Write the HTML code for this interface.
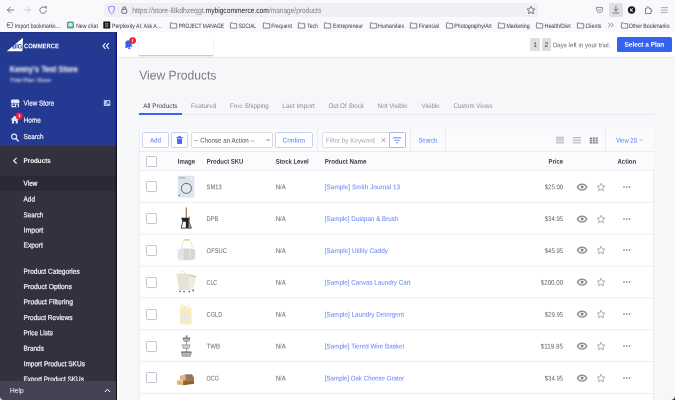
<!DOCTYPE html>
<html lang="en">
<head>
<meta charset="utf-8">
<title>View Products</title>
<style>
html,body{margin:0;padding:0;}
body{width:675px;height:400px;overflow:hidden;background:#f6f7f9;font-family:"Liberation Sans",sans-serif;}
#root{position:relative;width:675px;height:400px;overflow:hidden;background:#f6f7f9;will-change:transform;}
.a{position:absolute;box-sizing:border-box;}
.t{position:absolute;left:0;top:0;white-space:nowrap;display:block;transform-origin:0 0;}
svg{position:absolute;overflow:visible;}
.z6{z-index:6;}
.sb{-webkit-text-stroke:0.2px currentColor;}
.blur1{filter:blur(1.1px);}
.blur2{filter:blur(0.9px);}
</style>
</head>
<body>
<div id="root">
<div class="a" style="left:0px;top:0px;width:675.00px;height:32.00px;background:#f9f9fb;"></div>
<div class="a" style="left:0px;top:31.5px;width:675.00px;height:0.50px;background:#e4e4e8;"></div>
<div class="a" style="left:104.4px;top:2.6px;width:433.60px;height:14.80px;background:#f0f0f4;border-radius:2px;"></div>
<svg style="left:0px;top:0.4px" width="60" height="20" viewBox="0 0 60 20">
<g fill="none" stroke="#5b5b66" stroke-width="0.8" stroke-linecap="round" stroke-linejoin="round">
<path d="M13.800 10H7.500M10.300 7.200L7.500 10l2.800 2.800"/>
<path d="M24.200 10h6.200M27.600 7.200l2.800 2.800-2.800 2.800" stroke="#c3c3ca"/>
<path d="M46.000 8.500A3.300 3.300 0 1 0 46.400 10.800"/>
</g>
<path d="M44.400 6.300h2.300v2.300z" fill="#5b5b66"/>
</svg>
<svg style="left:100px;top:0px" width="40" height="20" viewBox="0 0 40 20">
<path transform="translate(-3.2 0.4)" d="M11.7 6.6c1.3-.2 2.3-.7 3.0-.7.7 0 1.700.5 3.000.7 0 3.300-1.200 5.700-3.000 6.900-1.800-1.200-3.000-3.600-3.000-6.900z" fill="none" stroke="#6f7bf7" stroke-width="0.9" stroke-linejoin="round"/>
<rect x="21.900" y="9.3" width="4.8" height="4.0" rx="0.8" fill="none" stroke="#5b5b66" stroke-width="0.9"/>
<path d="M22.900 9.3V8.2a1.400 1.400 0 0 1 2.800 0v1.100" fill="none" stroke="#5b5b66" stroke-width="0.9"/>
</svg>
<svg style="left:520px;top:0px" width="30" height="20" viewBox="0 0 30 20"><path d="M11 6.200l1.200 2.500 2.700.35-2 1.900.5 2.700-2.400-1.300-2.400 1.300.5-2.700-2-1.900 2.700-.35z" fill="none" stroke="#5b5b66" stroke-width="0.8" stroke-linejoin="round"/></svg>
<div class="a" style="left:609px;top:2.8px;width:13.80px;height:13.80px;background:#dfdfe5;border-radius:2px;"></div>
<svg style="left:590px;top:0.3px" width="85" height="20" viewBox="0 0 85 20">
<g fill="none" stroke="#60606b" stroke-width="0.800" stroke-linecap="round" stroke-linejoin="round">
<path d="M6.600 7.400h6v2.200a3 3 0 0 1-6 0z" stroke="#74747f"/><path d="M8.200 9.200l1.400 1.300 1.400-1.300" stroke="#74747f"/>
<path d="M25.900 6.300v4.600M23.900 9l2 2 2-2M22.900 13h6"/>
<path d="M55.500 13.200V8.400h1.300c0-1.100.3-1.700 1.100-1.700.8 0 1.100.6 1.100 1.700h1.800v1.500c.9 0 1.400.3 1.400.9s-.5.900-1.400.9v1.500z"/>
<path d="M71.200 7.600h6.200M71.200 10h6.200M71.200 12.400h6.200" stroke-width="0.700" stroke="#8b8b96"/>
</g>
<circle cx="41.600" cy="10" r="3.700" fill="#1a1a1f"/>
<path d="M40.300 8.200v3.600h.8V10.400l1.300 1.400h1l-1.600-1.800 1.500-1.800h-1l-1.200 1.500V8.200z" fill="#fff"/>
</svg>
<svg style="left:170.1px;top:22px" width="8" height="8" viewBox="0 0 8 8"><path d="M0.400 0.900h2.200l.7.800h3.400v4.400H0.400z" fill="none" stroke="#55555f" stroke-width="0.700" stroke-linejoin="round"/></svg>
<svg style="left:230.1px;top:22px" width="8" height="8" viewBox="0 0 8 8"><path d="M0.400 0.900h2.200l.7.800h3.400v4.400H0.400z" fill="none" stroke="#55555f" stroke-width="0.700" stroke-linejoin="round"/></svg>
<svg style="left:263.2px;top:22px" width="8" height="8" viewBox="0 0 8 8"><path d="M0.400 0.900h2.200l.7.800h3.400v4.400H0.400z" fill="none" stroke="#55555f" stroke-width="0.700" stroke-linejoin="round"/></svg>
<svg style="left:298.1px;top:22px" width="8" height="8" viewBox="0 0 8 8"><path d="M0.400 0.900h2.200l.7.800h3.400v4.400H0.400z" fill="none" stroke="#55555f" stroke-width="0.700" stroke-linejoin="round"/></svg>
<svg style="left:323.9px;top:22px" width="8" height="8" viewBox="0 0 8 8"><path d="M0.400 0.900h2.200l.7.800h3.400v4.400H0.400z" fill="none" stroke="#55555f" stroke-width="0.700" stroke-linejoin="round"/></svg>
<svg style="left:369.5px;top:22px" width="8" height="8" viewBox="0 0 8 8"><path d="M0.400 0.900h2.200l.7.800h3.400v4.400H0.400z" fill="none" stroke="#55555f" stroke-width="0.700" stroke-linejoin="round"/></svg>
<svg style="left:410.3px;top:22px" width="8" height="8" viewBox="0 0 8 8"><path d="M0.400 0.900h2.200l.7.800h3.400v4.400H0.400z" fill="none" stroke="#55555f" stroke-width="0.700" stroke-linejoin="round"/></svg>
<svg style="left:445.5px;top:22px" width="8" height="8" viewBox="0 0 8 8"><path d="M0.400 0.900h2.200l.7.800h3.400v4.400H0.400z" fill="none" stroke="#55555f" stroke-width="0.700" stroke-linejoin="round"/></svg>
<svg style="left:498.3px;top:22px" width="8" height="8" viewBox="0 0 8 8"><path d="M0.400 0.900h2.200l.7.800h3.400v4.400H0.400z" fill="none" stroke="#55555f" stroke-width="0.700" stroke-linejoin="round"/></svg>
<svg style="left:536.3px;top:22px" width="8" height="8" viewBox="0 0 8 8"><path d="M0.400 0.900h2.200l.7.800h3.400v4.400H0.400z" fill="none" stroke="#55555f" stroke-width="0.700" stroke-linejoin="round"/></svg>
<svg style="left:577.3px;top:22px" width="8" height="8" viewBox="0 0 8 8"><path d="M0.400 0.900h2.200l.7.800h3.400v4.400H0.400z" fill="none" stroke="#55555f" stroke-width="0.700" stroke-linejoin="round"/></svg>
<svg style="left:620.5px;top:22px" width="8" height="8" viewBox="0 0 8 8"><path d="M0.400 0.900h2.200l.7.800h3.400v4.400H0.400z" fill="none" stroke="#55555f" stroke-width="0.700" stroke-linejoin="round"/></svg>
<svg style="left:6px;top:21px" width="8" height="8" viewBox="0 0 8 8"><rect x="1.500" y="1.500" width="5" height="5" rx="0.8" fill="none" stroke="#5b5b66" stroke-width="0.7"/><path d="M0.300 4h3.200M2.600 3l1 1-1 1" fill="none" stroke="#5b5b66" stroke-width="0.7"/></svg>
<svg style="left:66px;top:21px" width="50" height="9" viewBox="0 0 50 9"><rect x="0.900" y="0.500" width="7.100" height="7.100" rx="1.500" fill="#55a590"/><rect x="2.300" y="2" width="4.300" height="3.400" rx="0.900" fill="#cdebe2"/><path d="M3.600 5.200v1.200l1.200-1.200z" fill="#cdebe2"/><rect x="37.300" y="0.500" width="6.900" height="7.100" rx="0.500" fill="#121214"/><rect x="39.300" y="1.900" width="2.900" height="4.300" fill="#8e8e92"/><path d="M40.750 1.900v4.300M39.300 4h2.900" stroke="#121214" stroke-width="0.500"/></svg>
<svg style="left:607px;top:21px" width="8" height="8" viewBox="0 0 8 8"><path d="M1.200 1.800L3.400 4 1.200 6.200M4 1.800L6.200 4 4 6.200" fill="none" stroke="#5b5b66" stroke-width="0.7"/></svg>
<div class="a" style="left:0px;top:32px;width:116.60px;height:114.00px;background:#243991;"></div>
<div class="a" style="left:0px;top:32px;width:116.60px;height:1.00px;background:#1f3187;"></div>
<div class="a" style="left:0px;top:145.6px;width:116.60px;height:254.40px;background:#34313f;"></div>
<div class="a" style="left:0px;top:175.6px;width:116.60px;height:15.40px;background:#2b2935;"></div>
<svg style="left:110px;top:32px" width="10" height="368" viewBox="0 0 10 368"><rect x="5.800" y="0" width="1.300" height="113.600" fill="#0c0c7c"/><rect x="5.800" y="113.600" width="1.300" height="254.400" fill="#121118"/></svg>
<div class="a" style="left:117.1px;top:57.8px;width:1.90px;height:342.20px;background:#fcfcfd;"></div>
<svg style="left:0px;top:32px" width="70" height="24" viewBox="0 0 70 24">
<path d="M6.700 19.200L23 5.700L22.400 19.200z" fill="#fff"/>
</svg>
<svg style="left:99.2px;top:39.7px" width="12" height="12" viewBox="0 0 12 12"><path d="M6.500 3.100L4.000 6l2.500 2.900M9.900 3.100L7.400 6l2.500 2.900" fill="none" stroke="#e3e7ff" stroke-width="1.150"/></svg>
<svg style="left:10px;top:98px" width="12" height="12" viewBox="0 0 12 12">
<path d="M1.600 1.400h7.200l.8 2.600c0 .8-.6 1.300-1.300 1.300s-1.200-.5-1.200-1.300c0 .8-.5 1.300-1.200 1.300S3.700 4.800 3.700 4c0 .8-.5 1.300-1.200 1.300S.8 4.800.8 4z" fill="#e8ecff"/>
<path d="M1.400 5.600h7.600v3.600H1.400z" fill="#e8ecff"/><rect x="2.500" y="6.400" width="2.600" height="1.600" fill="#22368f"/><rect x="6.200" y="6.400" width="1.700" height="2.800" fill="#22368f"/>
</svg>
<svg style="left:103px;top:99px" width="9" height="9" viewBox="0 0 9 9"><rect x="0.800" y="1.100" width="6.500" height="6" rx="1.200" fill="#b7c2f6"/><path d="M2.800 5.700L5.600 2.900M3.700 2.700h2.100v2.100" fill="none" stroke="#1b2c85" stroke-width="0.900"/></svg>
<svg style="left:10px;top:114px" width="14" height="12" viewBox="0 0 14 12"><path d="M4.800 1.600L.6 5.500h1.300v4h2.100V6.900h1.700v2.600h2.100v-4h1.300z" fill="#dfe4ff"/><circle cx="9.200" cy="1.900" r="3.500" fill="#e8243c"/><path d="M8.850 0.300h0.900v3.300h-0.900z" fill="#fff"/></svg>
<svg style="left:10px;top:131.6px" width="12" height="12" viewBox="0 0 12 12"><circle cx="4.100" cy="4.600" r="2.500" fill="none" stroke="#dfe4ff" stroke-width="1.150"/><path d="M6 6.600L8.300 9" stroke="#dfe4ff" stroke-width="1.400" stroke-linecap="round"/></svg>
<svg style="left:10px;top:155px" width="12" height="12" viewBox="0 0 12 12"><path d="M6.600 2.900L3.700 5.700l2.900 2.800" fill="none" stroke="#fff" stroke-width="1.100"/></svg>
<div class="a" style="left:0;top:381px;width:116.400px;height:19px;background:#454353;z-index:5;"></div>
<svg style="left:102px;top:385px;z-index:6" width="12" height="12" viewBox="0 0 12 12"><path d="M2.800 7L5.400 4.300 8 7" fill="none" stroke="#fff" stroke-width="1"/></svg>
<div class="a" style="left:117.1px;top:32px;width:557.90px;height:25.00px;background:#fff;"></div>
<div class="a" style="left:117.1px;top:57px;width:557.90px;height:0.80px;background:#e6e8ed;"></div>
<div class="a" style="left:139px;top:38px;width:74.00px;height:17.30px;background:#fff;box-shadow:0 0.6px 1.200px rgba(60,60,80,.35);"></div>
<svg style="left:122px;top:36px" width="16" height="16" viewBox="0 0 16 16"><g transform="rotate(-14 6.500 9)"><path d="M2.300 11.200c1.200-1 1.300-2.400 1.400-3.800.1-1.900 1.200-3.100 2.800-3.100s2.700 1.200 2.800 3.100c.1 1.400.2 2.800 1.400 3.800z" fill="#2f62f3"/><circle cx="6.500" cy="12.300" r="1.100" fill="#2f62f3"/></g><circle cx="10.600" cy="4.600" r="3.400" fill="#e8243c"/><path d="M10.300 3v3.300h0.800V3z" fill="#fff"/></svg>
<div class="a" style="left:530.4px;top:38.2px;width:9.20px;height:12.80px;background:#dddee2;border-radius:1px;"></div>
<div class="a" style="left:541.7px;top:38.2px;width:9.30px;height:12.80px;background:#dddee2;border-radius:1px;"></div>
<div class="a" style="left:617.4px;top:37px;width:54.30px;height:14.80px;background:#3463f0;border-radius:1.500px;"></div>
<div class="a" style="left:139px;top:113.8px;width:515.00px;height:0.60px;background:#e8eaef;"></div>
<div class="a" style="left:139px;top:112.9px;width:43.10px;height:1.70px;background:#3c64f4;"></div>
<div class="a" style="left:139px;top:128.8px;width:515.20px;height:272.20px;background:#fff;border:0.7px solid #eaecf1;"></div>
<div class="a" style="left:139.6px;top:129.4px;width:514.00px;height:40.80px;background:#fbfbfd;"></div>
<div class="a" style="left:139.2px;top:151.1px;width:514.80px;height:0.70px;background:#eaecf1;"></div>
<svg style="left:139.4px;top:120px" width="516" height="282" viewBox="0 0 516 282"><rect x="0.600" y="50.00" width="513.800" height="0.900" fill="#eaecf1"/><rect x="0.600" y="81.87" width="513.800" height="0.900" fill="#eaecf1"/><rect x="0.600" y="113.74" width="513.800" height="0.900" fill="#eaecf1"/><rect x="0.600" y="145.61" width="513.800" height="0.900" fill="#eaecf1"/><rect x="0.600" y="177.48" width="513.800" height="0.900" fill="#eaecf1"/><rect x="0.600" y="209.35" width="513.800" height="0.900" fill="#eaecf1"/><rect x="0.600" y="241.22" width="513.800" height="0.900" fill="#eaecf1"/><rect x="0.600" y="273.09" width="513.800" height="0.900" fill="#eaecf1"/></svg>
<div class="a" style="left:317.3px;top:129.4px;width:0.70px;height:22.00px;background:#eaecf1;"></div>
<div class="a" style="left:410.2px;top:129.4px;width:0.70px;height:22.00px;background:#eaecf1;"></div>
<div class="a" style="left:444.9px;top:129.4px;width:0.70px;height:22.00px;background:#eaecf1;"></div>
<div class="a" style="left:605.0px;top:129.4px;width:0.70px;height:22.00px;background:#eaecf1;"></div>
<div class="a" style="left:142.3px;top:132.4px;width:26.50px;height:15.40px;border:0.8px solid #c6d1f9;border-radius:1.500px;background:#fff;"></div>
<div class="a" style="left:171.3px;top:132.4px;width:16.70px;height:15.40px;border:0.8px solid #c6d1f9;border-radius:1.500px;background:#fff;"></div>
<svg style="left:175px;top:135px" width="10" height="10" viewBox="0 0 10 10"><path d="M1.400 1.900h6.300v1h-6.300zM3.400 1h2.300v.9H3.400zM1.900 3.400h5.300l-.3 5.600H2.200z" fill="#456bf5"/></svg>
<div class="a" style="left:191px;top:132.3px;width:82.00px;height:15.50px;border:0.8px solid #d9dbe1;border-radius:1.500px;background:#fff;"></div>
<svg style="left:264px;top:136px" width="8" height="8" viewBox="0 0 8 8"><path d="M2.800 3.200L4.200 4.700 5.600 3.200" fill="none" stroke="#4a4a55" stroke-width="0.8"/></svg>
<div class="a" style="left:275px;top:132.4px;width:38.00px;height:15.40px;border:0.8px solid #c6d1f9;border-radius:1.500px;background:#fff;"></div>
<div class="a" style="left:322px;top:132.3px;width:67.60px;height:15.50px;border:0.8px solid #dcdee4;border-radius:1.500px 0 0 1.500px;background:#fff;"></div>
<div class="a" style="left:389px;top:132.4px;width:17.00px;height:15.40px;border:0.8px solid #a9baf7;border-radius:0 1.500px 1.500px 0;background:#fff;"></div>
<svg style="left:379px;top:136px" width="9" height="9" viewBox="0 0 9 9"><path d="M2.600 2.300l3.800 3.800M6.400 2.300L2.600 6.100" stroke="#7b7b86" stroke-width="0.7"/></svg>
<svg style="left:391.3px;top:135px" width="12" height="10" viewBox="0 0 12 10"><path d="M1.800 2.800h8.400M3.400 5.300h5.200M5 7.700h2" stroke="#5f80f5" stroke-width="0.9"/></svg>
<svg style="left:555px;top:135px" width="50" height="12" viewBox="0 0 50 12">
<path d="M0.900 2.500h8.200M0.900 4.300h8.200M0.900 6.100h8.200M0.900 7.900h8.200" stroke="#c3c3c9" stroke-width="1.300"/>
<path d="M17.800 2.700h8.100M17.800 5.200h8.100M17.800 7.800h8.100" stroke="#86868f" stroke-width="0.700"/>
<g fill="#83838d">
<rect x="34.800" y="2.400" width="2.100" height="1.800"/><rect x="37.700" y="2.400" width="2.100" height="1.800"/><rect x="40.600" y="2.400" width="2.100" height="1.800"/>
<rect x="34.800" y="4.600" width="2.100" height="1.800"/><rect x="37.700" y="4.600" width="2.100" height="1.800"/><rect x="40.600" y="4.600" width="2.100" height="1.800"/>
<rect x="34.800" y="6.800" width="2.100" height="1.800"/><rect x="37.700" y="6.800" width="2.100" height="1.800"/><rect x="40.600" y="6.800" width="2.100" height="1.800"/></g>
</svg>
<svg style="left:637px;top:136px" width="8" height="8" viewBox="0 0 8 8"><path d="M2.800 3.200L4.300 4.700 5.800 3.200" fill="none" stroke="#8a8a95" stroke-width="0.7"/></svg>
<div class="a" style="left:146.1px;top:155.8px;width:11.00px;height:11.00px;border:0.8px solid #c4c6cd;border-radius:1.200px;background:#fff;"></div>
<div class="a" style="left:146.1px;top:181.25px;width:11.00px;height:11.00px;border:0.8px solid #c4c6cd;border-radius:1.200px;background:#fff;"></div>
<svg style="left:575px;top:180.75px" width="60" height="12" viewBox="0 0 60 12"><path d="M2.400 6.100c1.100-1.900 2.700-3.000 4.700-3.000s3.600 1.100 4.700 3.000c-1.100 1.900-2.700 3.000-4.700 3.000S3.500 8 2.400 6.100z" fill="#fff" stroke="#8a8a94" stroke-width="1.300" stroke-linejoin="round"/><circle cx="7.100" cy="6.100" r="1.500" fill="#84848e"/><path d="M26 2.300l1.200 2.500 2.700.35-2 1.900.5 2.700L26 8.400l-2.400 1.350.5-2.700-2-1.900 2.700-.35z" fill="none" stroke="#8a8a94" stroke-width="0.700" stroke-linejoin="round"/><circle cx="49" cy="6.100" r="0.800" fill="#72727c"/><circle cx="51.800" cy="6.100" r="0.800" fill="#72727c"/><circle cx="54.600" cy="6.100" r="0.800" fill="#72727c"/></svg>
<div class="a" style="left:146.1px;top:213.12px;width:11.00px;height:11.00px;border:0.8px solid #c4c6cd;border-radius:1.200px;background:#fff;"></div>
<svg style="left:575px;top:212.62px" width="60" height="12" viewBox="0 0 60 12"><path d="M2.400 6.100c1.100-1.900 2.700-3.000 4.700-3.000s3.600 1.100 4.700 3.000c-1.100 1.900-2.700 3.000-4.700 3.000S3.500 8 2.400 6.100z" fill="#fff" stroke="#8a8a94" stroke-width="1.300" stroke-linejoin="round"/><circle cx="7.100" cy="6.100" r="1.500" fill="#84848e"/><path d="M26 2.300l1.200 2.500 2.700.35-2 1.900.5 2.700L26 8.400l-2.400 1.350.5-2.700-2-1.900 2.700-.35z" fill="none" stroke="#8a8a94" stroke-width="0.700" stroke-linejoin="round"/><circle cx="49" cy="6.100" r="0.800" fill="#72727c"/><circle cx="51.800" cy="6.100" r="0.800" fill="#72727c"/><circle cx="54.600" cy="6.100" r="0.800" fill="#72727c"/></svg>
<div class="a" style="left:146.1px;top:244.99px;width:11.00px;height:11.00px;border:0.8px solid #c4c6cd;border-radius:1.200px;background:#fff;"></div>
<svg style="left:575px;top:244.49px" width="60" height="12" viewBox="0 0 60 12"><path d="M2.400 6.100c1.100-1.900 2.700-3.000 4.700-3.000s3.600 1.100 4.700 3.000c-1.100 1.900-2.700 3.000-4.700 3.000S3.500 8 2.400 6.100z" fill="#fff" stroke="#8a8a94" stroke-width="1.300" stroke-linejoin="round"/><circle cx="7.100" cy="6.100" r="1.500" fill="#84848e"/><path d="M26 2.300l1.200 2.500 2.700.35-2 1.900.5 2.700L26 8.400l-2.400 1.350.5-2.700-2-1.900 2.700-.35z" fill="none" stroke="#8a8a94" stroke-width="0.700" stroke-linejoin="round"/><circle cx="49" cy="6.100" r="0.800" fill="#72727c"/><circle cx="51.800" cy="6.100" r="0.800" fill="#72727c"/><circle cx="54.600" cy="6.100" r="0.800" fill="#72727c"/></svg>
<div class="a" style="left:146.1px;top:276.86px;width:11.00px;height:11.00px;border:0.8px solid #c4c6cd;border-radius:1.200px;background:#fff;"></div>
<svg style="left:575px;top:276.36px" width="60" height="12" viewBox="0 0 60 12"><path d="M2.400 6.100c1.100-1.900 2.700-3.000 4.700-3.000s3.600 1.100 4.700 3.000c-1.100 1.900-2.700 3.000-4.700 3.000S3.500 8 2.400 6.100z" fill="#fff" stroke="#8a8a94" stroke-width="1.300" stroke-linejoin="round"/><circle cx="7.100" cy="6.100" r="1.500" fill="#84848e"/><path d="M26 2.300l1.200 2.500 2.700.35-2 1.900.5 2.700L26 8.400l-2.400 1.350.5-2.700-2-1.900 2.700-.35z" fill="none" stroke="#8a8a94" stroke-width="0.700" stroke-linejoin="round"/><circle cx="49" cy="6.100" r="0.800" fill="#72727c"/><circle cx="51.800" cy="6.100" r="0.800" fill="#72727c"/><circle cx="54.600" cy="6.100" r="0.800" fill="#72727c"/></svg>
<div class="a" style="left:146.1px;top:308.73px;width:11.00px;height:11.00px;border:0.8px solid #c4c6cd;border-radius:1.200px;background:#fff;"></div>
<svg style="left:575px;top:308.23px" width="60" height="12" viewBox="0 0 60 12"><path d="M2.400 6.100c1.100-1.900 2.700-3.000 4.700-3.000s3.600 1.100 4.700 3.000c-1.100 1.900-2.700 3.000-4.700 3.000S3.500 8 2.400 6.100z" fill="#fff" stroke="#8a8a94" stroke-width="1.300" stroke-linejoin="round"/><circle cx="7.100" cy="6.100" r="1.500" fill="#84848e"/><path d="M26 2.300l1.200 2.500 2.700.35-2 1.900.5 2.700L26 8.400l-2.400 1.350.5-2.700-2-1.900 2.700-.35z" fill="none" stroke="#8a8a94" stroke-width="0.700" stroke-linejoin="round"/><circle cx="49" cy="6.100" r="0.800" fill="#72727c"/><circle cx="51.800" cy="6.100" r="0.800" fill="#72727c"/><circle cx="54.600" cy="6.100" r="0.800" fill="#72727c"/></svg>
<div class="a" style="left:146.1px;top:340.6px;width:11.00px;height:11.00px;border:0.8px solid #c4c6cd;border-radius:1.200px;background:#fff;"></div>
<svg style="left:575px;top:340.1px" width="60" height="12" viewBox="0 0 60 12"><path d="M2.400 6.100c1.100-1.900 2.700-3.000 4.700-3.000s3.600 1.100 4.700 3.000c-1.100 1.900-2.700 3.000-4.700 3.000S3.500 8 2.400 6.100z" fill="#fff" stroke="#8a8a94" stroke-width="1.300" stroke-linejoin="round"/><circle cx="7.100" cy="6.100" r="1.500" fill="#84848e"/><path d="M26 2.300l1.200 2.500 2.700.35-2 1.900.5 2.700L26 8.400l-2.400 1.350.5-2.700-2-1.900 2.700-.35z" fill="none" stroke="#8a8a94" stroke-width="0.700" stroke-linejoin="round"/><circle cx="49" cy="6.100" r="0.800" fill="#72727c"/><circle cx="51.800" cy="6.100" r="0.800" fill="#72727c"/><circle cx="54.600" cy="6.100" r="0.800" fill="#72727c"/></svg>
<div class="a" style="left:146.1px;top:372.47px;width:11.00px;height:11.00px;border:0.8px solid #c4c6cd;border-radius:1.200px;background:#fff;"></div>
<svg style="left:575px;top:371.97px" width="60" height="12" viewBox="0 0 60 12"><path d="M2.400 6.100c1.100-1.900 2.700-3.000 4.700-3.000s3.600 1.100 4.700 3.000c-1.100 1.900-2.700 3.000-4.700 3.000S3.500 8 2.400 6.100z" fill="#fff" stroke="#8a8a94" stroke-width="1.300" stroke-linejoin="round"/><circle cx="7.100" cy="6.100" r="1.500" fill="#84848e"/><path d="M26 2.300l1.200 2.500 2.700.35-2 1.900.5 2.700L26 8.400l-2.400 1.350.5-2.700-2-1.900 2.700-.35z" fill="none" stroke="#8a8a94" stroke-width="0.700" stroke-linejoin="round"/><circle cx="49" cy="6.100" r="0.800" fill="#72727c"/><circle cx="51.800" cy="6.100" r="0.800" fill="#72727c"/><circle cx="54.600" cy="6.100" r="0.800" fill="#72727c"/></svg>
<svg style="left:170px;top:172.05px" width="32" height="32" viewBox="0 0 32 32"><rect x="7.800" y="3.700" width="16.600" height="21.900" fill="#dde4ee"/><circle cx="16.400" cy="16.400" r="5.050" fill="none" stroke="#66605f" stroke-width="0.950"/><circle cx="16.400" cy="16.400" r="3.600" fill="#e3e9f1"/><rect x="8.900" y="5.200" width="6.300" height="1.300" fill="#a3adc6"/><rect x="20.800" y="5" width="1.400" height="3.600" fill="#eef2f7"/><rect x="8.400" y="22.600" width="1.300" height="1.400" fill="#6c6f7a"/></svg>
<svg style="left:170px;top:204.02px" width="32" height="32" viewBox="0 0 32 32"><path d="M16.250 3.600v10.400" stroke="#6b4a2e" stroke-width="0.900"/><path d="M16.250 3.600v3.600" stroke="#e0913f" stroke-width="0.900"/><path d="M11.200 13.700h8.800l-.8 3.400 2.700 7.300H10.800l1.500-7.300z" fill="#23222b"/><path d="M12.900 17.800h3l0 6H11.700z" fill="#f2f2f4"/><path d="M19 17.800l1.900 6h-2.100z" fill="#b9b9c0"/><path d="M19.200 12v12" stroke="#c9935a" stroke-width="0.700"/></svg>
<svg style="left:170px;top:236.39px" width="32" height="32" viewBox="0 0 32 32"><path d="M11.600 13.200c.4-4.600 1.400-7.600 3.000-9.000M22.300 11.600c-.4-3.600-1.300-6.200-2.800-7.400" fill="none" stroke="#d6d6da" stroke-width="0.700"/><rect x="14.100" y="2.900" width="5.700" height="1.800" rx="0.600" fill="#ecd08e"/><path d="M7.800 14.200c0-1.200 3.900-1.800 8.700-1.800s8.700.6 8.700 1.800v7.600c0 1.700-3.900 2.500-8.700 2.500s-8.700-.8-8.700-2.500z" fill="#d6d6d9"/><path d="M7.800 14.200c0-1.100 2.400-1.700 6.000-1.800v11.800c-3.600-.2-6.000-1.000-6.000-2.400z" fill="#e4e4e7"/><path d="M20.200 13.400v9.600" stroke="#e6e2d4" stroke-width="1.600"/></svg>
<svg style="left:170px;top:266.16px" width="32" height="32" viewBox="0 0 32 32"><g><path d="M10.500 8.300c0-4.4 4.2-4.4 4.2 0" fill="none" stroke="#e4e2dc" stroke-width="0.900"/><path d="M19.600 8.600l6.400 1.600-2.400 12.900-4.400.9z" fill="#efece4"/><path d="M19.600 8.600l6.400 1.600-.2 1-6.300-1.500z" fill="#d9b98a"/><path d="M6.400 8.300h13.200l-.4 15.600H9.200z" fill="#e7e2d4"/><path d="M6.400 8.300h13.200" stroke="#d8d2c2" stroke-width="0.600"/><circle cx="10" cy="25.300" r="0.900" fill="#6a6866"/><circle cx="14" cy="25.600" r="0.900" fill="#6a6866"/><circle cx="19.200" cy="25.600" r="0.900" fill="#6a6866"/><circle cx="23.200" cy="24.500" r="0.900" fill="#6a6866"/></g></svg>
<svg style="left:170px;top:298.03px" width="32" height="32" viewBox="0 0 32 32"><path d="M10 10l1-3.600h3.200l.2 1.800 2.200 0 .3-1.200h3l.4 1.800 1.300 1.400v15c0 .7-.5 1.200-1.200 1.200H11.200c-.7 0-1.200-.5-1.200-1.200z" fill="#f5edc1"/><path d="M11.300 9.400l.6-2.300h1.500v2.300z" fill="#fdfbf0"/><rect x="16.600" y="7.600" width="3.600" height="2.600" fill="#fbfaf3"/><rect x="11.600" y="15.600" width="7.200" height="6.800" fill="#eae7e6"/></svg>
<svg style="left:170px;top:330.1px" width="32" height="32" viewBox="0 0 32 32"><path d="M16.600 5.200v21.200" stroke="#55555e" stroke-width="0.600"/><path d="M12.900 8.100h7.100l-1 3.200h-5.100z" fill="#b9b9bf" stroke="#5a5a63" stroke-width="0.450"/><path d="M12.100 14.800h8.100l-1.100 3.600h-5.900z" fill="#cdcdd2" stroke="#6a6a73" stroke-width="0.450"/><path d="M11.300 22h10.100l-1.100 4.300h-7.900z" fill="#b4b4ba" stroke="#55555e" stroke-width="0.450"/><path d="M12.900 8.100h7.100M11.300 22h10.100" stroke="#4c4c55" stroke-width="0.600"/><path d="M15.400 6.200h2.400" stroke="#55555e" stroke-width="0.500"/></svg>
<svg style="left:170px;top:361.97px" width="32" height="32" viewBox="0 0 32 32"><path d="M12.400 13.400l9.300-.2 2.300 2.200v6.400l-10.400.7z" fill="#a57645"/><path d="M14 12.500l7.600-.2 2.200 2.200-6.600.2z" fill="#77757a"/><path d="M10 13.400l5.600.2v4.600l-5.600-.3z" fill="#e0b47a"/><path d="M6.800 18.300l6.400.3v4.600l-6.400-.6z" fill="#e6ba7e"/><path d="M13.200 19.800l10.800-.6v2.600l-10.800 1.400z" fill="#8f5f34"/><circle cx="9.800" cy="20.800" r="0.600" fill="#85858a"/></svg>
<svg style="left:669px;top:394px" width="6" height="6" viewBox="0 0 6 6"><path d="M6 6H2.200C4.400 5.600 5.600 4.400 6 2.200z" fill="#2a2a2e"/></svg>
<svg style="left:0;top:394px;z-index:7" width="6" height="6" viewBox="0 0 6 6"><path d="M0 6h3.200C1.400 5.600.4 4.600 0 2.800z" fill="#d8d8dc"/></svg>
<span class="t" style="font-size:7.8px;line-height:9.36px;color:#7a7a84;transform:translate(132.20px,5.92px) scaleX(0.882) rotate(0.03deg);">https://store-l8kdhzeqgt.</span>
<span class="t" style="font-size:7.8px;line-height:9.36px;color:#1c1b22;transform:translate(205.60px,5.92px) scaleX(0.854) rotate(0.03deg);">mybigcommerce.com</span>
<span class="t" style="font-size:7.8px;line-height:9.36px;color:#7a7a84;transform:translate(268.90px,5.92px) scaleX(0.838) rotate(0.03deg);">/manage/products</span>
<span class="t" style="font-size:6.3px;line-height:7.56px;color:#34333c;transform:translate(14.70px,21.92px) scaleX(0.813) rotate(0.03deg);">Import bookmarks…</span>
<span class="t" style="font-size:6.3px;line-height:7.56px;color:#34333c;transform:translate(76.00px,21.92px) scaleX(0.834) rotate(0.03deg);">New chat</span>
<span class="t" style="font-size:6.3px;line-height:7.56px;color:#34333c;transform:translate(112.00px,21.92px) scaleX(0.826) rotate(0.03deg);">Perplexity AI: Ask A…</span>
<span class="t" style="font-size:6.3px;line-height:7.56px;color:#34333c;transform:translate(178.70px,21.92px) scaleX(0.777) rotate(0.03deg);">PROJECT MANAGE</span>
<span class="t" style="font-size:6.3px;line-height:7.56px;color:#34333c;transform:translate(238.70px,21.92px) scaleX(0.748) rotate(0.03deg);">SOCIAL</span>
<span class="t" style="font-size:6.3px;line-height:7.56px;color:#34333c;transform:translate(271.20px,21.92px) scaleX(0.825) rotate(0.03deg);">Frequent</span>
<span class="t" style="font-size:6.3px;line-height:7.56px;color:#34333c;transform:translate(307.20px,21.92px) scaleX(0.804) rotate(0.03deg);">Tech</span>
<span class="t" style="font-size:6.3px;line-height:7.56px;color:#34333c;transform:translate(333.00px,21.92px) scaleX(0.816) rotate(0.03deg);">Entrepreneur</span>
<span class="t" style="font-size:6.3px;line-height:7.56px;color:#34333c;transform:translate(378.00px,21.92px) scaleX(0.828) rotate(0.03deg);">Humanities</span>
<span class="t" style="font-size:6.3px;line-height:7.56px;color:#34333c;transform:translate(418.80px,21.92px) scaleX(0.801) rotate(0.03deg);">Financial</span>
<span class="t" style="font-size:6.3px;line-height:7.56px;color:#34333c;transform:translate(454.30px,21.92px) scaleX(0.824) rotate(0.03deg);">Photography/Art</span>
<span class="t" style="font-size:6.3px;line-height:7.56px;color:#34333c;transform:translate(506.40px,21.92px) scaleX(0.842) rotate(0.03deg);">Marketing</span>
<span class="t" style="font-size:6.3px;line-height:7.56px;color:#34333c;transform:translate(544.60px,21.92px) scaleX(0.838) rotate(0.03deg);">Health/Diet</span>
<span class="t" style="font-size:6.3px;line-height:7.56px;color:#34333c;transform:translate(585.40px,21.92px) scaleX(0.836) rotate(0.03deg);">Clients</span>
<span class="t" style="font-size:6.3px;line-height:7.56px;color:#34333c;transform:translate(628.80px,21.92px) scaleX(0.831) rotate(0.03deg);">Other Bookmarks</span>
<span class="t" style="font-size:6.4px;line-height:7.68px;color:#243991;font-weight:700;transform:translate(12.20px,42.56px) scaleX(0.888) rotate(0.03deg);">BIG</span>
<span class="t" style="font-size:6.7px;line-height:8.04px;color:#fff;font-weight:700;transform:translate(24.00px,42.28px) scaleX(0.878) rotate(0.03deg);">COMMERCE</span>
<span class="t blur1" style="font-size:8.4px;line-height:10.08px;color:#fff;font-weight:700;transform:translate(9.80px,64.16px) scaleX(0.908) rotate(0.03deg);">Kenny's Test Store</span>
<span class="t blur2" style="font-size:5.8px;line-height:6.96px;color:#fff;transform:translate(9.80px,76.92px) scaleX(1.041) rotate(0.03deg);">Trial Plan Store</span>
<span class="t sb" style="font-size:7.2px;line-height:8.64px;color:#f2f3fb;transform:translate(23.60px,99.58px) scaleX(0.884) rotate(0.03deg);">View Store</span>
<span class="t sb" style="font-size:7.2px;line-height:8.64px;color:#f2f3fb;transform:translate(23.60px,116.48px) scaleX(0.901) rotate(0.03deg);">Home</span>
<span class="t sb" style="font-size:7.2px;line-height:8.64px;color:#f2f3fb;transform:translate(23.60px,133.08px) scaleX(0.873) rotate(0.03deg);">Search</span>
<span class="t" style="font-size:7px;line-height:8.40px;color:#fff;font-weight:700;transform:translate(23.60px,156.90px) scaleX(0.893) rotate(0.03deg);">Products</span>
<span class="t sb" style="font-size:7.2px;line-height:8.64px;color:#fff;transform:translate(23.60px,179.68px) scaleX(0.886) rotate(0.03deg);">View</span>
<span class="t sb" style="font-size:7.2px;line-height:8.64px;color:#f2f3fb;transform:translate(23.60px,195.38px) scaleX(0.891) rotate(0.03deg);">Add</span>
<span class="t sb" style="font-size:7.2px;line-height:8.64px;color:#f2f3fb;transform:translate(23.60px,211.18px) scaleX(0.865) rotate(0.03deg);">Search</span>
<span class="t sb" style="font-size:7.2px;line-height:8.64px;color:#f2f3fb;transform:translate(23.60px,226.38px) scaleX(0.967) rotate(0.03deg);">Import</span>
<span class="t sb" style="font-size:7.2px;line-height:8.64px;color:#f2f3fb;transform:translate(23.60px,241.58px) scaleX(0.924) rotate(0.03deg);">Export</span>
<span class="t sb" style="font-size:7.2px;line-height:8.64px;color:#f2f3fb;transform:translate(23.60px,267.78px) scaleX(0.912) rotate(0.03deg);">Product Categories</span>
<span class="t sb" style="font-size:7.2px;line-height:8.64px;color:#f2f3fb;transform:translate(23.60px,282.98px) scaleX(0.937) rotate(0.03deg);">Product Options</span>
<span class="t sb" style="font-size:7.2px;line-height:8.64px;color:#f2f3fb;transform:translate(23.60px,298.28px) scaleX(0.944) rotate(0.03deg);">Product Filtering</span>
<span class="t sb" style="font-size:7.2px;line-height:8.64px;color:#f2f3fb;transform:translate(23.60px,313.88px) scaleX(0.905) rotate(0.03deg);">Product Reviews</span>
<span class="t sb" style="font-size:7.2px;line-height:8.64px;color:#f2f3fb;transform:translate(23.60px,329.28px) scaleX(0.881) rotate(0.03deg);">Price Lists</span>
<span class="t sb" style="font-size:7.2px;line-height:8.64px;color:#f2f3fb;transform:translate(23.60px,344.68px) scaleX(0.891) rotate(0.03deg);">Brands</span>
<span class="t sb" style="font-size:7.2px;line-height:8.64px;color:#f2f3fb;transform:translate(23.60px,360.18px) scaleX(0.909) rotate(0.03deg);">Import Product SKUs</span>
<span class="t sb" style="font-size:7.2px;line-height:8.64px;color:#f2f3fb;transform:translate(23.60px,375.38px) scaleX(0.888) rotate(0.03deg);">Export Product SKUs</span>
<span class="t z6" style="font-size:7px;line-height:8.40px;color:#fff;transform:translate(10.10px,386.70px) scaleX(0.937) rotate(0.03deg);">Help</span>
<span class="t" style="font-size:6.8px;line-height:8.16px;color:#3f3f4a;transform:translate(533.20px,41.12px) scaleX(1.000) rotate(0.03deg);">1</span>
<span class="t" style="font-size:6.8px;line-height:8.16px;color:#3f3f4a;transform:translate(544.50px,41.12px) scaleX(1.000) rotate(0.03deg);">2</span>
<span class="t" style="font-size:6.6px;line-height:7.92px;color:#666672;transform:translate(552.90px,41.14px) scaleX(0.932) rotate(0.03deg);">Days left in your trial.</span>
<span class="t" style="font-size:7px;line-height:8.40px;color:#fff;font-weight:700;transform:translate(624.50px,40.80px) scaleX(0.921) rotate(0.03deg);">Select a Plan</span>
<span class="t" style="font-size:12.6px;line-height:15.12px;color:#7c7c87;transform:translate(139.20px,68.54px) scaleX(0.962) rotate(0.03deg);">View Products</span>
<span class="t" style="font-size:6.7px;line-height:8.04px;color:#3b3b46;transform:translate(143.30px,102.08px) scaleX(0.955) rotate(0.03deg);">All Products</span>
<span class="t" style="font-size:6.7px;line-height:8.04px;color:#8b8b95;transform:translate(191.00px,102.08px) scaleX(0.941) rotate(0.03deg);">Featured</span>
<span class="t" style="font-size:6.7px;line-height:8.04px;color:#8b8b95;transform:translate(229.90px,102.08px) scaleX(0.932) rotate(0.03deg);">Free Shipping</span>
<span class="t" style="font-size:6.7px;line-height:8.04px;color:#8b8b95;transform:translate(282.30px,102.08px) scaleX(0.974) rotate(0.03deg);">Last Import</span>
<span class="t" style="font-size:6.7px;line-height:8.04px;color:#8b8b95;transform:translate(328.40px,102.08px) scaleX(0.927) rotate(0.03deg);">Out Of Stock</span>
<span class="t" style="font-size:6.7px;line-height:8.04px;color:#8b8b95;transform:translate(377.60px,102.08px) scaleX(0.948) rotate(0.03deg);">Not Visible</span>
<span class="t" style="font-size:6.7px;line-height:8.04px;color:#8b8b95;transform:translate(421.40px,102.08px) scaleX(0.939) rotate(0.03deg);">Visible</span>
<span class="t" style="font-size:6.7px;line-height:8.04px;color:#8b8b95;transform:translate(453.40px,102.08px) scaleX(0.917) rotate(0.03deg);">Custom Views</span>
<span class="t" style="font-size:6.8px;line-height:8.16px;color:#5a7bf3;transform:translate(149.90px,136.62px) scaleX(0.926) rotate(0.03deg);">Add</span>
<span class="t" style="font-size:6.8px;line-height:8.16px;color:#4b4b55;transform:translate(194.30px,136.62px) scaleX(0.913) rotate(0.03deg);">-- Choose an Action --</span>
<span class="t" style="font-size:6.8px;line-height:8.16px;color:#5a7bf3;transform:translate(282.50px,136.62px) scaleX(0.958) rotate(0.03deg);">Confirm</span>
<span class="t" style="font-size:6.8px;line-height:8.16px;color:#a6a6ae;transform:translate(326.10px,136.62px) scaleX(0.927) rotate(0.03deg);">Filter by Keyword</span>
<span class="t" style="font-size:6.8px;line-height:8.16px;color:#5a7bf3;transform:translate(418.40px,136.62px) scaleX(0.877) rotate(0.03deg);">Search</span>
<span class="t" style="font-size:6.8px;line-height:8.16px;color:#5a7bf3;transform:translate(615.90px,136.62px) scaleX(0.877) rotate(0.03deg);">View 20</span>
<span class="t" style="font-size:6.8px;line-height:8.16px;color:#3a3844;font-weight:700;transform:translate(177.70px,157.72px) scaleX(0.890) rotate(0.03deg);">Image</span>
<span class="t" style="font-size:6.8px;line-height:8.16px;color:#3a3844;font-weight:700;transform:translate(206.80px,157.72px) scaleX(0.871) rotate(0.03deg);">Product SKU</span>
<span class="t" style="font-size:6.8px;line-height:8.16px;color:#3a3844;font-weight:700;transform:translate(275.70px,157.72px) scaleX(0.871) rotate(0.03deg);">Stock Level</span>
<span class="t" style="font-size:6.8px;line-height:8.16px;color:#3a3844;font-weight:700;transform:translate(324.70px,157.72px) scaleX(0.903) rotate(0.03deg);">Product Name</span>
<span class="t" style="font-size:6.8px;line-height:8.16px;color:#3a3844;font-weight:700;transform:translate(548.50px,157.72px) scaleX(0.871) rotate(0.03deg);">Price</span>
<span class="t" style="font-size:6.8px;line-height:8.16px;color:#3a3844;font-weight:700;transform:translate(617.50px,157.72px) scaleX(0.884) rotate(0.03deg);">Action</span>
<span class="t" style="font-size:6.8px;line-height:8.16px;color:#5f5f6b;transform:translate(206.60px,183.17px) scaleX(0.855) rotate(0.03deg);">SM13</span>
<span class="t" style="font-size:6.8px;line-height:8.16px;color:#5f5f6b;transform:translate(275.70px,183.17px) scaleX(0.899) rotate(0.03deg);">N/A</span>
<span class="t" style="font-size:6.8px;line-height:8.16px;color:#5f7ff3;transform:translate(324.80px,183.17px) scaleX(0.945) rotate(0.03deg);">[Sample] Smith Journal 13</span>
<span class="t" style="font-size:6.8px;line-height:8.16px;color:#5f5f6b;transform:translate(544.70px,183.17px) scaleX(0.885) rotate(0.03deg);">$25.00</span>
<span class="t" style="font-size:6.8px;line-height:8.16px;color:#5f5f6b;transform:translate(206.60px,215.04px) scaleX(0.844) rotate(0.03deg);">DPB</span>
<span class="t" style="font-size:6.8px;line-height:8.16px;color:#5f5f6b;transform:translate(275.70px,215.04px) scaleX(0.899) rotate(0.03deg);">N/A</span>
<span class="t" style="font-size:6.8px;line-height:8.16px;color:#5f7ff3;transform:translate(324.80px,215.04px) scaleX(0.919) rotate(0.03deg);">[Sample] Dustpan &amp; Brush</span>
<span class="t" style="font-size:6.8px;line-height:8.16px;color:#5f5f6b;transform:translate(544.70px,215.04px) scaleX(0.885) rotate(0.03deg);">$34.95</span>
<span class="t" style="font-size:6.8px;line-height:8.16px;color:#5f5f6b;transform:translate(206.60px,246.91px) scaleX(0.857) rotate(0.03deg);">OFSUC</span>
<span class="t" style="font-size:6.8px;line-height:8.16px;color:#5f5f6b;transform:translate(275.70px,246.91px) scaleX(0.899) rotate(0.03deg);">N/A</span>
<span class="t" style="font-size:6.8px;line-height:8.16px;color:#5f7ff3;transform:translate(324.80px,246.91px) scaleX(0.945) rotate(0.03deg);">[Sample] Utility Caddy</span>
<span class="t" style="font-size:6.8px;line-height:8.16px;color:#5f5f6b;transform:translate(544.70px,246.91px) scaleX(0.885) rotate(0.03deg);">$45.95</span>
<span class="t" style="font-size:6.8px;line-height:8.16px;color:#5f5f6b;transform:translate(206.60px,278.78px) scaleX(0.779) rotate(0.03deg);">CLC</span>
<span class="t" style="font-size:6.8px;line-height:8.16px;color:#5f5f6b;transform:translate(275.70px,278.78px) scaleX(0.899) rotate(0.03deg);">N/A</span>
<span class="t" style="font-size:6.8px;line-height:8.16px;color:#5f7ff3;transform:translate(324.80px,278.78px) scaleX(0.922) rotate(0.03deg);">[Sample] Canvas Laundry Cart</span>
<span class="t" style="font-size:6.8px;line-height:8.16px;color:#5f5f6b;transform:translate(540.80px,278.78px) scaleX(0.907) rotate(0.03deg);">$200.00</span>
<span class="t" style="font-size:6.8px;line-height:8.16px;color:#5f5f6b;transform:translate(206.60px,310.65px) scaleX(0.836) rotate(0.03deg);">CGLD</span>
<span class="t" style="font-size:6.8px;line-height:8.16px;color:#5f5f6b;transform:translate(275.70px,310.65px) scaleX(0.899) rotate(0.03deg);">N/A</span>
<span class="t" style="font-size:6.8px;line-height:8.16px;color:#5f7ff3;transform:translate(324.80px,310.65px) scaleX(0.933) rotate(0.03deg);">[Sample] Laundry Detergent</span>
<span class="t" style="font-size:6.8px;line-height:8.16px;color:#5f5f6b;transform:translate(544.70px,310.65px) scaleX(0.885) rotate(0.03deg);">$29.95</span>
<span class="t" style="font-size:6.8px;line-height:8.16px;color:#5f5f6b;transform:translate(206.60px,342.52px) scaleX(0.893) rotate(0.03deg);">TWB</span>
<span class="t" style="font-size:6.8px;line-height:8.16px;color:#5f5f6b;transform:translate(275.70px,342.52px) scaleX(0.899) rotate(0.03deg);">N/A</span>
<span class="t" style="font-size:6.8px;line-height:8.16px;color:#5f7ff3;transform:translate(324.80px,342.52px) scaleX(0.921) rotate(0.03deg);">[Sample] Tiered Wire Basket</span>
<span class="t" style="font-size:6.8px;line-height:8.16px;color:#5f5f6b;transform:translate(540.80px,342.52px) scaleX(0.926) rotate(0.03deg);">$119.95</span>
<span class="t" style="font-size:6.8px;line-height:8.16px;color:#5f5f6b;transform:translate(206.60px,374.39px) scaleX(0.794) rotate(0.03deg);">OCG</span>
<span class="t" style="font-size:6.8px;line-height:8.16px;color:#5f5f6b;transform:translate(275.70px,374.39px) scaleX(0.899) rotate(0.03deg);">N/A</span>
<span class="t" style="font-size:6.8px;line-height:8.16px;color:#5f7ff3;transform:translate(324.80px,374.39px) scaleX(0.905) rotate(0.03deg);">[Sample] Oak Cheese Grater</span>
<span class="t" style="font-size:6.8px;line-height:8.16px;color:#5f5f6b;transform:translate(544.70px,374.39px) scaleX(0.885) rotate(0.03deg);">$34.95</span>
</div>
</body>
</html>
